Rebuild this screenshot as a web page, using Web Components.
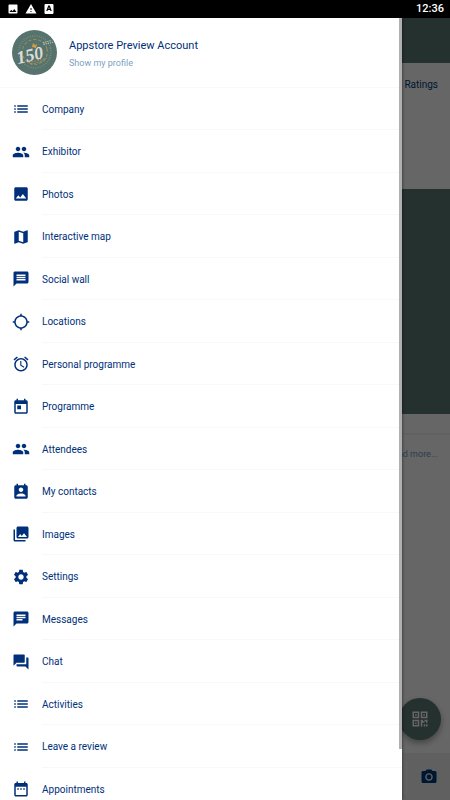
<!DOCTYPE html>
<html lang="en">
<head>
<meta charset="UTF-8">
<meta name="viewport" content="width=device-width, initial-scale=1.0">
<title>Event app</title>
<style>
    html, body { height: 100%; }
    body {
        margin: 0;
        overflow: hidden;
        font-family: Roboto, "Liberation Sans", sans-serif;
    }
</style>
</head>
<body>
<app-shell>
    <status-bar slot="status" time="12:36"></status-bar>
    <event-page slot="page"></event-page>
    <nav-drawer slot="drawer">
        <profile-card slot="header" name="Appstore Preview Account"></profile-card>
        <menu-item icon="list">Company</menu-item>
        <menu-item icon="people">Exhibitor</menu-item>
        <menu-item icon="photo">Photos</menu-item>
        <menu-item icon="map">Interactive map</menu-item>
        <menu-item icon="message">Social wall</menu-item>
        <menu-item icon="location">Locations</menu-item>
        <menu-item icon="alarm">Personal programme</menu-item>
        <menu-item icon="event">Programme</menu-item>
        <menu-item icon="people">Attendees</menu-item>
        <menu-item icon="contacts">My contacts</menu-item>
        <menu-item icon="images">Images</menu-item>
        <menu-item icon="settings">Settings</menu-item>
        <menu-item icon="chat">Messages</menu-item>
        <menu-item icon="forum">Chat</menu-item>
        <menu-item icon="list">Activities</menu-item>
        <menu-item icon="list">Leave a review</menu-item>
        <menu-item icon="dates">Appointments</menu-item>
    </nav-drawer>
</app-shell>

<script>
const ICONS = {
    list: '<path d="M3 9h2V7H3v2zm0 4h2v-2H3v2zm0 4h2v-2H3v2zM7 7v2h14V7H7zm0 6h14v-2H7v2zm0 4h14v-2H7v2z"/>',
    people: '<path d="M16 11c1.66 0 2.99-1.34 2.99-3S17.66 5 16 5s-3 1.34-3 3 1.34 3 3 3zm-8 0c1.66 0 2.99-1.34 2.99-3S9.66 5 8 5 5 6.34 5 8s1.34 3 3 3zm0 2c-2.33 0-7 1.17-7 3.5V19h14v-2.5C15 14.17 10.33 13 8 13zm8 0c-.29 0-.62.02-.97.05 1.16.84 1.97 1.97 1.97 3.45V19h6v-2.5c0-2.33-4.67-3.5-7-3.5z"/>',
    photo: '<path d="M21 19V5c0-1.1-.9-2-2-2H5c-1.1 0-2 .9-2 2v14c0 1.1.9 2 2 2h14c1.1 0 2-.9 2-2zM8.5 13.5l2.5 3.01L14.5 12l4.5 6H5l3.5-4.5z"/>',
    map: '<path d="M20.5 3l-.16.03L15 5.1 9 3 3.36 4.9c-.21.07-.36.25-.36.48V20.5c0 .28.22.5.5.5l.16-.03L9 18.9l6 2.1 5.64-1.9c.21-.07.36-.25.36-.48V3.5c0-.28-.22-.5-.5-.5zM15 19l-6-2.11V5l6 2.11V19z"/>',
    message: '<path d="M20 2H4c-1.1 0-1.99.9-1.99 2L2 22l4-4h14c1.1 0 2-.9 2-2V4c0-1.1-.9-2-2-2zm-2 12H6v-2h12v2zm0-3H6V9h12v2zm0-3H6V6h12v2z"/>',
    chat: '<path d="M20 2H4c-1.1 0-1.99.9-1.99 2L2 22l4-4h14c1.1 0 2-.9 2-2V4c0-1.1-.9-2-2-2zM6 9h12v2H6V9zm8 5H6v-2h8v2zm4-6H6V6h12v2z"/>',
    location: '<path d="M20.94 11c-.46-4.17-3.77-7.48-7.94-7.94V1h-2v2.06C6.83 3.52 3.52 6.83 3.06 11H1v2h2.06c.46 4.17 3.77 7.48 7.94 7.94V23h2v-2.06c4.17-.46 7.48-3.77 7.94-7.94H23v-2h-2.06zM12 19c-3.87 0-7-3.13-7-7s3.13-7 7-7 7 3.13 7 7-3.13 7-7 7z"/>',
    alarm: '<path d="M22 5.72l-4.6-3.86-1.29 1.53 4.6 3.86L22 5.72zM7.88 3.39L6.6 1.86 2 5.71l1.29 1.53 4.59-3.85zM12.5 8H11v6l4.75 2.85.75-1.23-4-2.37V8zM12 4c-4.97 0-9 4.03-9 9s4.02 9 9 9c4.97 0 9-4.03 9-9s-4.03-9-9-9zm0 16c-3.87 0-7-3.13-7-7s3.13-7 7-7 7 3.13 7 7-3.13 7-7 7z"/>',
    event: '<path d="M19 3h-1V1h-2v2H8V1H6v2H5c-1.11 0-1.99.9-1.99 2L3 19c0 1.1.89 2 2 2h14c1.1 0 2-.9 2-2V5c0-1.1-.9-2-2-2zm0 16H5V8h14v11zM7 10h5v5H7z"/>',
    dates: '<path d="M9 11H7v2h2v-2zm4 0h-2v2h2v-2zm4 0h-2v2h2v-2zm2-7h-1V2h-2v2H8V2H6v2H5c-1.11 0-1.99.9-1.99 2L3 20c0 1.1.89 2 2 2h14c1.1 0 2-.9 2-2V6c0-1.1-.9-2-2-2zm0 16H5V9h14v11z"/>',
    contacts: '<path d="M19 3h-1V1h-2v2H8V1H6v2H5c-1.11 0-2 .9-2 2v14c0 1.1.89 2 2 2h14c1.1 0 2-.9 2-2V5c0-1.1-.9-2-2-2zm-7 3c1.66 0 3 1.34 3 3s-1.34 3-3 3-3-1.34-3-3 1.34-3 3-3zm6 12H6v-1c0-2 4-3.1 6-3.1s6 1.1 6 3.1v1z"/>',
    images: '<path d="M22 16V4c0-1.1-.9-2-2-2H8c-1.1 0-2 .9-2 2v12c0 1.1.9 2 2 2h12c1.1 0 2-.9 2-2zm-11-4l2.03 2.71L16 11l4 5H8l3-4zM2 6v14c0 1.1.9 2 2 2h14v-2H4V6H2z"/>',
    settings: '<path d="M19.14 12.94c.04-.3.06-.61.06-.94s-.02-.64-.07-.94l2.03-1.58c.18-.14.23-.41.12-.61l-1.92-3.32c-.12-.22-.37-.29-.59-.22l-2.39.96c-.5-.38-1.03-.7-1.62-.94l-.36-2.54c-.04-.24-.24-.41-.48-.41h-3.84c-.24 0-.43.17-.47.41l-.36 2.54c-.59.24-1.13.57-1.62.94l-2.39-.96c-.22-.08-.47 0-.59.22L2.74 8.87c-.12.21-.08.47.12.61l2.03 1.58c-.05.3-.09.63-.09.94s.02.64.07.94l-2.03 1.58c-.18.14-.23.41-.12.61l1.92 3.32c.12.22.37.29.59.22l2.39-.96c.5.38 1.03.7 1.62.94l.36 2.54c.05.24.24.41.48.41h3.84c.24 0 .44-.17.47-.41l.36-2.54c.59-.24 1.13-.56 1.62-.94l2.39.96c.22.08.47 0 .59-.22l1.92-3.32c.12-.22.07-.47-.12-.61l-2.01-1.58zM12 15.6c-1.98 0-3.6-1.62-3.6-3.6s1.62-3.6 3.6-3.6 3.6 1.62 3.6 3.6-1.62 3.6-3.6 3.6z"/>',
    forum: '<path d="M21 6h-2v9H6v2c0 .55.45 1 1 1h11l4 4V7c0-.55-.45-1-1-1zm-4 6V3c0-.55-.45-1-1-1H3c-.55 0-1 .45-1 1v14l4-4h10c.55 0 1-.45 1-1z"/>',
    camera: '<circle cx="12" cy="12" r="3.2"/><path d="M9 2L7.17 4H4c-1.1 0-2 .9-2 2v12c0 1.1.9 2 2 2h16c1.1 0 2-.9 2-2V6c0-1.1-.9-2-2-2h-3.17L15 2H9zm3 15c-2.76 0-5-2.24-5-5s2.24-5 5-5 5 2.24 5 5-2.24 5-5 5z"/>',
    qr: '<path fill-rule="evenodd" d="M2 2h9v9H2zM4 4v5h5V4zM13 2h9v9h-9zM15 4v5h5V4zM2 13h9v9H2zM4 15v5h5v-5zM5.5 5.5h2v2h-2zM16.5 5.5h2v2h-2zM5.5 16.5h2v2h-2zM13 13h3v2h2v2h-3v5h-2zM18 13h4v4h-2v-2h-2zM17 19h2v3h-2zM20 19h2v3h-2z"/>',
    warning: '<path d="M1 21h22L12 2 1 21zm12-3h-2v-2h2v2zm0-4h-2v-4h2v4z"/>',
    keyboard: '<path fill-rule="evenodd" d="M5 2h14a2 2 0 0 1 2 2v16a2 2 0 0 1-2 2H5a2 2 0 0 1-2-2V4a2 2 0 0 1 2-2zM10.5 5L6.5 16h2.6l.7-2.2h4.4l.7 2.2h2.6L13.5 5zM12 7.8l1.3 3.9h-2.6z"/>'
};

class UiIcon extends HTMLElement {
    connectedCallback() {
        this.attachShadow({ mode: 'open' });
        this.shadowRoot.innerHTML = `
            <style>
                :host {
                    display: block;
                    flex: none;
                    width: var(--icon-size, 18px);
                    height: var(--icon-size, 18px);
                }

                svg {
                    display: block;
                    width: 100%;
                    height: 100%;
                    fill: currentColor;
                }
            </style>
            <svg viewBox="0 0 24 24" aria-hidden="true">${ICONS[this.getAttribute('name')]}</svg>
        `;
    }
}

class AppShell extends HTMLElement {
    connectedCallback() {
        this.attachShadow({ mode: 'open' });
        this.shadowRoot.innerHTML = `
            <style>
                :host {
                    display: flex;
                    flex-direction: column;
                    height: 100vh;
                }

                main {
                    position: relative;
                    flex: 1;
                    min-height: 0;
                    overflow: hidden;
                }

                .scrim {
                    position: absolute;
                    inset: 0;
                    background: rgba(0, 0, 0, 0.6);
                }

                ::slotted(nav-drawer) {
                    position: absolute;
                    inset: 0 48px 0 0;
                }
            </style>
            <slot name="status"></slot>
            <main>
                <slot name="page"></slot>
                <div class="scrim"></div>
                <slot name="drawer"></slot>
            </main>
        `;
    }
}

class StatusBar extends HTMLElement {
    connectedCallback() {
        this.attachShadow({ mode: 'open' });
        this.shadowRoot.innerHTML = `
            <style>
                :host {
                    --icon-size: 12px;
                    display: flex;
                    align-items: center;
                    gap: 6px;
                    height: 18px;
                    padding: 0 6px 0 7px;
                    background: #000;
                    color: #fff;
                }

                time {
                    margin-left: auto;
                    font-size: 11px;
                    font-weight: 500;
                    line-height: 18px;
                }
            </style>
            <ui-icon name="photo"></ui-icon>
            <ui-icon name="warning"></ui-icon>
            <ui-icon name="keyboard"></ui-icon>
            <time>${this.getAttribute('time')}</time>
        `;
    }
}

class EventPage extends HTMLElement {
    connectedCallback() {
        this.attachShadow({ mode: 'open' });
        this.shadowRoot.innerHTML = `
            <style>
                :host {
                    display: flex;
                    flex-direction: column;
                    height: 100%;
                    background: #fff;
                    color: #003b7d;
                    font-size: 10px;
                }

                header {
                    height: 45px;
                    background: #5d7b75;
                }

                nav {
                    display: flex;
                    justify-content: flex-end;
                    height: 126px;
                    padding: 0 12px;
                    box-sizing: border-box;
                    line-height: 44px;
                }

                a {
                    color: inherit;
                    text-decoration: none;
                }

                .banner {
                    height: 225px;
                    background: #5d7b75;
                }

                .more {
                    display: flex;
                    justify-content: flex-end;
                    margin-top: 19px;
                    padding: 0 12px;
                    border-top: 2px solid #f2f2f2;
                    line-height: 38px;
                    font-size: 9px;
                    color: #6f9bc4;
                }

                footer {
                    display: flex;
                    align-items: center;
                    gap: 12px;
                    height: 46px;
                    margin-top: auto;
                    padding: 1px 12px 0;
                    background: #f0f0f0;
                }

                input {
                    flex: 1;
                    height: 36px;
                    box-sizing: border-box;
                    border: 0;
                    border-radius: 6px;
                    background: #f5f5f5;
                }

                button {
                    border: 0;
                    padding: 0;
                    background: none;
                    color: inherit;
                }

                .fab {
                    position: absolute;
                    right: 9px;
                    bottom: 60px;
                    display: grid;
                    place-items: center;
                    width: 42px;
                    height: 42px;
                    border-radius: 50%;
                    background: #5d7b75;
                    color: #fff;
                    box-shadow: 0 3px 6px rgba(0, 0, 0, 0.35);
                }
            </style>
            <header></header>
            <nav><a href="#ratings">Ratings</a></nav>
            <div class="banner"></div>
            <div class="more"><a href="#more">Read more...</a></div>
            <footer>
                <input type="text" aria-label="Write a post">
                <button aria-label="Take a photo"><ui-icon name="camera"></ui-icon></button>
            </footer>
            <button class="fab" aria-label="Scan code"><ui-icon name="qr"></ui-icon></button>
        `;
    }
}

class NavDrawer extends HTMLElement {
    connectedCallback() {
        this.attachShadow({ mode: 'open' });
        this.shadowRoot.innerHTML = `
            <style>
                :host {
                    display: block;
                    background: #fff;
                    color: #00307a;
                    box-shadow: 0 0 3px rgba(0, 0, 0, 0.6);
                }

                nav {
                    height: 100%;
                    overflow-y: auto;
                    scrollbar-width: none;
                }

                .thumb {
                    position: absolute;
                    top: 0;
                    right: 0;
                    width: 3px;
                    height: 731px;
                    background: #b0b0b0;
                }

                /* 85px for every two rows */
                ::slotted(menu-item) { height: 42px; }
                ::slotted(menu-item:nth-child(odd)) { height: 43px; }
            </style>
            <nav aria-label="Main menu">
                <slot name="header"></slot>
                <slot></slot>
            </nav>
            <div class="thumb"></div>
        `;
        this.nav = this.shadowRoot.querySelector('nav');
        this.thumb = this.shadowRoot.querySelector('.thumb');
        this.nav.addEventListener('scroll', () => this.moveThumb());
    }

    moveThumb() {
        const { scrollTop, scrollHeight, clientHeight } = this.nav;
        const range = scrollHeight - clientHeight;
        const room = clientHeight - this.thumb.offsetHeight;
        this.thumb.style.top = `${range ? Math.round(scrollTop / range * room) : 0}px`;
    }
}

class ProfileCard extends HTMLElement {
    connectedCallback() {
        this.attachShadow({ mode: 'open' });
        this.shadowRoot.innerHTML = `
            <style>
                :host {
                    display: flex;
                    align-items: center;
                    gap: 12px;
                    height: 70px;
                    padding-left: 12px;
                    box-sizing: border-box;
                    border-bottom: 1px solid #f8f8f8;
                }

                svg { display: block; width: 45px; height: 45px; }
                .text { padding-top: 2px; }
                .name { font-size: 11px; line-height: 18px; }

                a {
                    display: block;
                    font-size: 9px;
                    line-height: 16px;
                    color: #7c9fc3;
                    text-decoration: none;
                }
            </style>
            <svg viewBox="0 0 45 45" role="img" aria-label="Profile picture">
                <circle cx="22.5" cy="22.5" r="22.5" fill="#56736d"/>
                <g fill="none" transform="rotate(-14 22.5 22.5)">
                    <circle cx="23" cy="22" r="16" stroke="#a4a58f" stroke-width="1.5" stroke-dasharray="1 1.3" opacity=".5"/>
                    <circle cx="23" cy="22" r="12.5" stroke="#d2a152" stroke-dasharray="3 2" opacity=".6"/>
                    <path d="M14 31h19M16 33h14" stroke="#c8a060" stroke-dasharray="2 1" opacity=".6"/>
                    <path d="M33 15h9M33 17h10" stroke="#c9cfc5" stroke-dasharray="1.5 .7" opacity=".8"/>
                </g>
                <path d="M20 17l1-4 2 2 2-1-1 4z" fill="#d99c3c"/>
                <text x="6" y="34" transform="rotate(-13 6 34)" font-family="Liberation Serif, serif" font-size="18" font-weight="bold" font-style="italic" fill="#dcdcd8">150</text>
            </svg>
            <div class="text">
                <div class="name">${this.getAttribute('name')}</div>
                <a href="#profile">Show my profile</a>
            </div>
        `;
    }
}

class MenuItem extends HTMLElement {
    connectedCallback() {
        this.attachShadow({ mode: 'open' });
        this.shadowRoot.innerHTML = `
            <style>
                :host { display: block; }

                a {
                    display: flex;
                    align-items: center;
                    gap: 12px;
                    height: 100%;
                    padding-left: 12px;
                    color: inherit;
                    text-decoration: none;
                }

                .label {
                    display: flex;
                    flex: 1;
                    align-items: center;
                    height: 100%;
                    padding-top: 2px;
                    box-sizing: border-box;
                    border-bottom: 1px solid #f8f8f8;
                    font-size: 10px;
                    line-height: 12px;
                }
            </style>
            <a href="#${this.getAttribute('icon')}">
                <ui-icon name="${this.getAttribute('icon')}"></ui-icon>
                <span class="label"><slot></slot></span>
            </a>
        `;
    }
}

customElements.define('ui-icon', UiIcon);
customElements.define('app-shell', AppShell);
customElements.define('status-bar', StatusBar);
customElements.define('event-page', EventPage);
customElements.define('nav-drawer', NavDrawer);
customElements.define('profile-card', ProfileCard);
customElements.define('menu-item', MenuItem);
</script>
</body>
</html>
